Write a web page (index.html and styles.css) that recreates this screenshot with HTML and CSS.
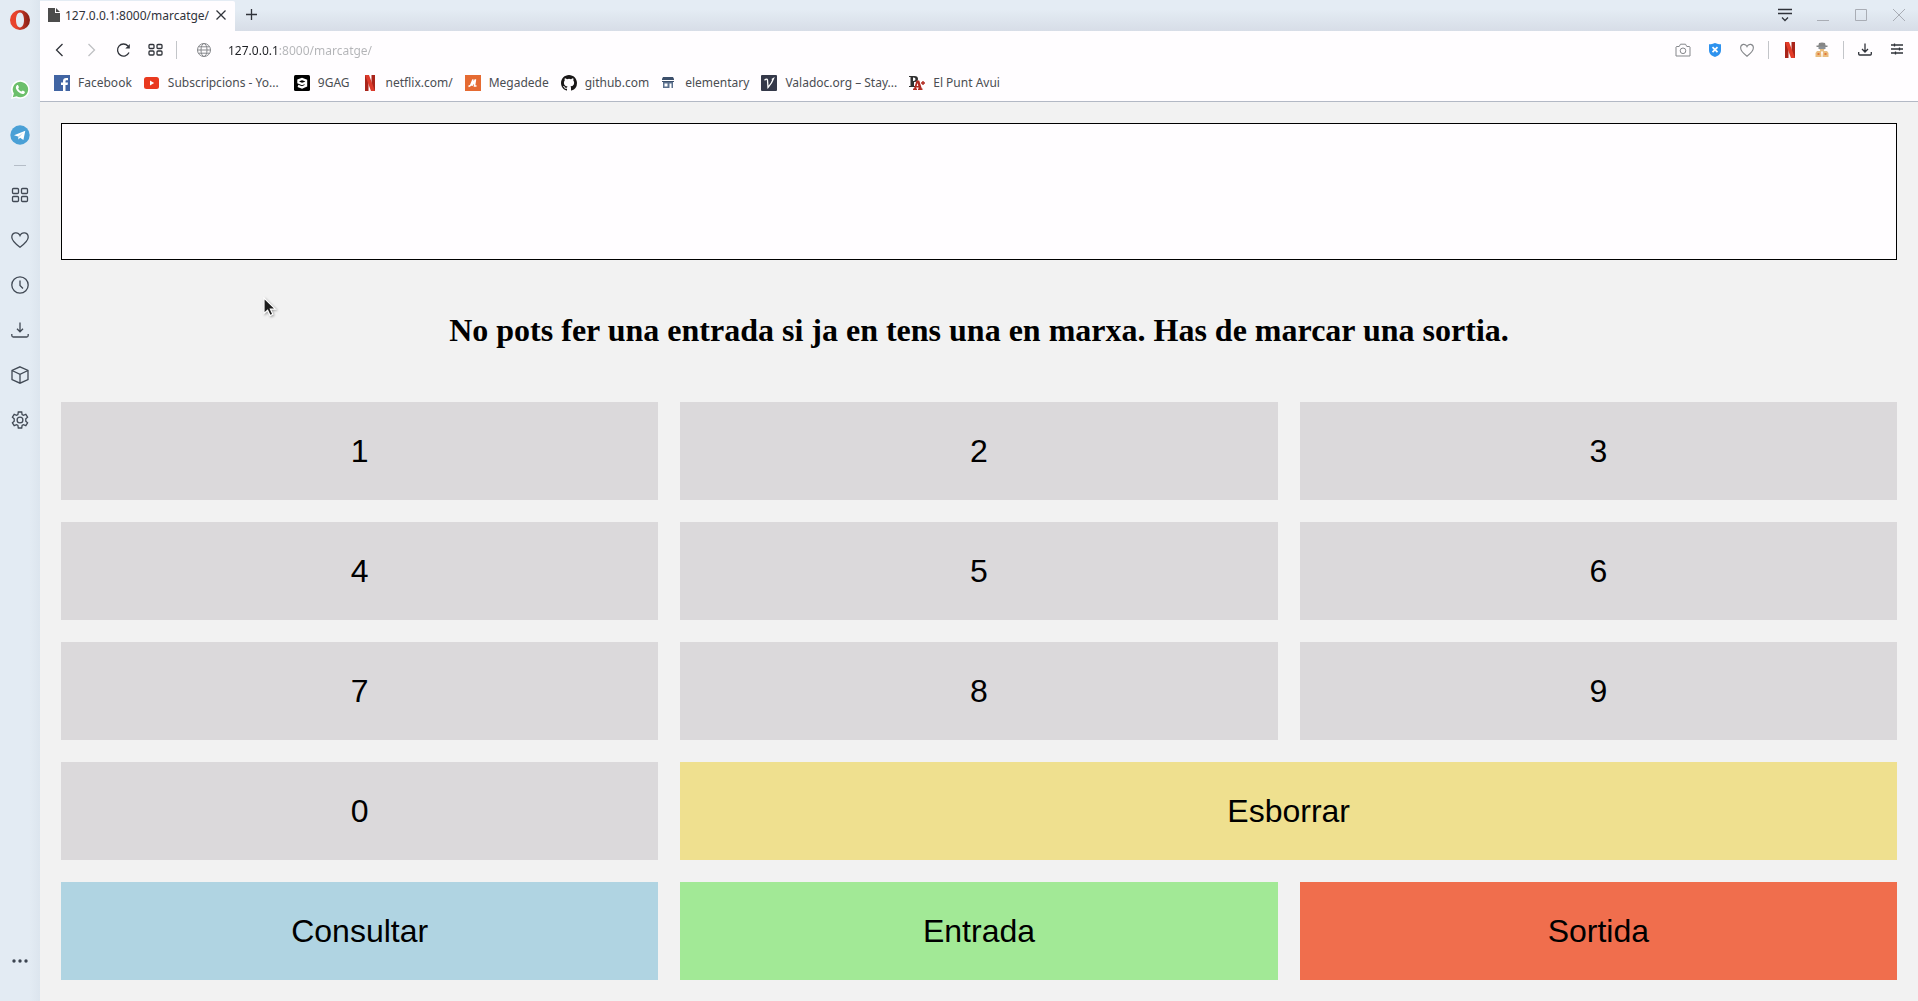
FILE: index.html
```html
<!DOCTYPE html>
<html lang="ca">
<head>
<meta charset="utf-8">
<title>127.0.0.1:8000/marcatge/</title>
<link rel="stylesheet" href="styles.css">
</head>
<body>
<div class="browser">
  <aside class="sidebar">
    <button class="opera" aria-label="Opera">
      <svg width="20" height="20" viewBox="0 0 20 20"><defs><linearGradient id="o" x1="0" x2="1"><stop offset="0.3" stop-color="#e8432c"/><stop offset="0.9" stop-color="#8f2318"/></linearGradient></defs><path fill="url(#o)" fill-rule="evenodd" d="M10 0a10 10 0 1 0 0 20 10 10 0 0 0 0-20zM10 2.600c2.500 0 4 3 4 7.400s-1.500 7.400-4 7.400-4-3-4-7.400 1.500-7.400 4-7.400z"/></svg>
    </button>
    <button class="side-btn" aria-label="WhatsApp">
      <svg width="20" height="20" viewBox="0 0 20 20"><path fill="#fff" d="M1 19l1.400-4.500A9.300 9.300 0 1 1 6 17.800z"/><path fill="#6cbf6b" d="M2.800 17.200l1.100-3.600a7.700 7.700 0 1 1 2.700 2.600z"/><path fill="#fff" d="M6.700 5.400c.5-.5 1.300-.5 1.500.1l.7 1.600c.2.500-.8 1.200-.6 1.600.7 1.300 1.600 2.200 3 2.800.5.200 1.100-1.100 1.600-.9l1.600.8c.7.400.3 1.500-.3 2-.8.700-2 .7-3.400.1-2.200-1-3.900-2.700-4.700-4.700-.4-1.300-.3-2.500.6-3.400z"/></svg>
    </button>
    <button class="side-btn" aria-label="Telegram">
      <svg width="20" height="20" viewBox="0 0 20 20"><circle cx="10" cy="10" r="9.700" fill="#4aa0d6"/><path fill="#fff" d="M4 10.200l11.300-4.500-1.900 9.300-3.300-2.300-1.700 1.700-.4-2.800z"/><path fill="#b9d8ea" d="M8 11.600l5.400-4.100-4.200 4.600-.8 2.300z"/></svg>
    </button>
    <div class="side-rule"></div>
    <button class="side-btn" aria-label="Speed Dial">
      <svg class="line" width="18" height="18" viewBox="0 0 18 18"><rect x="1.500" y="2.500" width="6" height="5" rx="1"/><rect x="10.500" y="2.500" width="6" height="5" rx="1"/><rect x="1.500" y="10.500" width="6" height="5" rx="1"/><rect x="10.500" y="10.500" width="6" height="5" rx="1"/></svg>
    </button>
    <button class="side-btn" aria-label="Bookmarks">
      <svg class="line" width="18" height="18" viewBox="0 0 18 18"><path d="M9 16.200C5 13.200.8 10 .8 6.200.8 1.200 7 .2 9 4.600c2-4.400 8.200-3.400 8.200 1.600 0 3.800-4.200 7-8.200 10z"/></svg>
    </button>
    <button class="side-btn" aria-label="History">
      <svg class="line" width="18" height="18" viewBox="0 0 18 18"><circle cx="9" cy="9" r="8.200"/><path d="M9 4.500v5l3 3"/></svg>
    </button>
    <button class="side-btn" aria-label="Downloads">
      <svg class="line" width="18" height="18" viewBox="0 0 18 18"><path d="M9 1.500v9M6 7.800l3 3 3-3M.8 13v1.500q0 1.500 1.500 1.500h13.400q1.500 0 1.500-1.500V13"/></svg>
    </button>
    <button class="side-btn" aria-label="Extensions">
      <svg class="line" width="18" height="18" viewBox="0 0 18 18"><path d="M9 .8l8 3.700v9L9 17.200l-8-3.700v-9zM1 4.500l8 3.900 8-3.900M9 8.400v8.800"/></svg>
    </button>
    <button class="side-btn" aria-label="Settings">
      <svg class="line" width="18" height="18" viewBox="0 0 18 18"><circle cx="9" cy="9" r="2.900"/><path d="M7.300 1h3.400l.4 2.500 1.300.8 2.400-.9 1.800 2.800-1.800 1.700v2.200l1.800 1.700-1.800 2.800-2.400-.9-1.300.8-.4 2.500H7.300l-.4-2.500-1.300-.8-2.400.9-1.800-2.800 1.800-1.700V7.900L1.400 6.200l1.800-2.800 2.400.9 1.300-.8z"/></svg>
    </button>
    <button class="side-btn side-more" aria-label="More">
      <svg width="16" height="4" viewBox="0 0 16 4" fill="#3c4450"><circle cx="2" cy="2" r="1.700"/><circle cx="8" cy="2" r="1.700"/><circle cx="14" cy="2" r="1.700"/></svg>
    </button>
  </aside>

  <div class="window">
    <header class="tabbar">
      <div class="tab">
        <svg width="12" height="14" viewBox="0 0 12 14" fill="#4c4c4c"><path d="M0 0h7v5h5v9H0z"/><path d="M8 0l4 4H8z"/></svg>
        <span class="tab-title">127.0.0.1:8000/marcatge/</span>
        <button class="tab-close" aria-label="Close tab"><svg class="line dark" width="10" height="10" viewBox="0 0 10 10"><path d="M.5.5l9 9M9.500.5l-9 9"/></svg></button>
      </div>
      <button class="icon-btn" aria-label="New tab"><svg class="line dark" width="12" height="12" viewBox="0 0 12 12"><path d="M6.500 0v11M1 5.500h11"/></svg></button>
      <div class="win-controls">
        <button class="win-btn" aria-label="Tab menu"><svg class="line dark" width="14" height="14" viewBox="0 0 14 14"><path d="M0 1.500h14M0 5.500h14M4 9.500l3 3 3-3"/></svg></button>
        <button class="win-btn" aria-label="Minimize"><svg class="line pale" width="12" height="12" viewBox="0 0 12 12"><path d="M0 11.500h12"/></svg></button>
        <button class="win-btn" aria-label="Maximize"><svg class="line pale" width="12" height="12" viewBox="0 0 12 12"><path d="M.5.5h11v11H.5z"/></svg></button>
        <button class="win-btn" aria-label="Close"><svg class="line pale" width="12" height="12" viewBox="0 0 12 12"><path d="M0 0l12 12M12 0L0 12"/></svg></button>
      </div>
    </header>

    <nav class="toolbar">
      <button class="icon-btn" aria-label="Back"><svg class="line dark" width="14" height="14" viewBox="0 0 14 14"><path d="M10.500 1l-6 6 6 6"/></svg></button>
      <button class="icon-btn" aria-label="Forward"><svg class="line faint" width="14" height="14" viewBox="0 0 14 14"><path d="M4.500 1l6 6-6 6"/></svg></button>
      <button class="icon-btn" aria-label="Reload"><svg class="line dark" width="14" height="14" viewBox="0 0 14 14"><path d="M13 9.500A6 6 0 1 1 12 3"/><path fill="#30333a" stroke="none" d="M13.800 1v4.500H9.300z"/></svg></button>
      <button class="icon-btn" aria-label="Speed Dial"><svg class="line dark" width="14" height="12" viewBox="0 0 14 12"><rect x="1" y=".5" width="5" height="4" rx="1"/><rect x="9" y=".5" width="5" height="4" rx="1"/><rect x="1" y="7" width="5" height="4" rx="1"/><rect x="9" y="7" width="5" height="4" rx="1"/></svg></button>
      <span class="sep"></span>
      <button class="icon-btn site-info" aria-label="Site information"><svg class="line gray" width="14" height="14" viewBox="0 0 14 14"><circle cx="7" cy="7" r="6.500"/><ellipse cx="7" cy="7" rx="3" ry="6.500"/><path d="M.5 7h13M1.500 3.800h11M1.500 10.200h11"/></svg></button>
      <input class="address" type="text" aria-label="Address" value="127.0.0.1:8000/marcatge/">
      <button class="icon-btn" aria-label="Snapshot"><svg class="line gray" width="16" height="14" viewBox="0 0 16 14"><path d="M1.500 3.500h2.700L5.500 1.200h5l1.300 2.300h2.700l.5.500v9H1V4z"/><circle cx="8" cy="7.800" r="2.800"/></svg></button>
      <button class="icon-btn" aria-label="Ad blocker"><svg width="14" height="14" viewBox="0 0 14 14"><path fill="#2e92ee" d="M7 0c2 1 4 1.300 6 1.300V7c0 4-3 6-6 7-3-1-6-3-6-7V1.300C3 1.300 5 1 7 0z"/><path stroke="#fff" stroke-width="1.700" d="M4.500 4.200l5 5M9.500 4.200l-5 5"/></svg></button>
      <button class="icon-btn" aria-label="Save to bookmarks"><svg class="line gray" width="14" height="14" viewBox="0 0 18 18"><path stroke-width="1.400" d="M9 17C5 14 .8 10.500 .8 6.200.8 1 7 .2 9 4.600c2-4.400 8.200-3.600 8.200 1.600 0 4.300-4.200 7.800-8.200 10.800z"/></svg></button>
      <span class="sep"></span>
      <button class="icon-btn" aria-label="Netflix extension"><svg width="10" height="16" viewBox="0 0 10 16"><path fill="#a9241a" d="M0 0h3.500v16H0zM6.500 0H10v16H6.500z"/><path fill="#e33b28" d="M0 0h4l6 16H6z"/></svg></button>
      <button class="icon-btn" aria-label="Private mode extension"><svg width="14" height="16" viewBox="0 0 14 16"><path fill="#858585" d="M4 1q3-1 6 0l.6 2.500H12.500V5h-11V3.500h1.900z"/><path fill="#8b9096" d="M3.500 4.500h7V7h-7z"/><path fill="#e9bd7f" d="M4.500 7h5l-1 2.500h-3zM2 9h4l.5 6H.5v-4zM8 9h4l1.500 2v4h-6z"/><path fill="#e4783a" d="M2.500 11h2v2h-2zM9.500 11h2v2h-2z"/></svg></button>
      <span class="sep"></span>
      <button class="icon-btn" aria-label="Downloads"><svg class="line dark" width="14" height="14" viewBox="0 0 14 14"><path d="M7 .5v8M4 6l3 3 3-3M.7 9v2q0 1 1 1h10.600q1 0 1-1V9"/></svg></button>
      <button class="icon-btn" aria-label="Easy setup"><svg class="line dark" width="12" height="12" viewBox="0 0 12 12"><path d="M0 1h12M0 5h12M0 9h12M3.500-.5v3M8.500 3.500v3M4.500 7.500v3"/></svg></button>
    </nav>

    <nav class="bookmarks" aria-label="Bookmarks bar">
      <a class="bookmark" href="#"><svg width="16" height="16" viewBox="0 0 16 16"><path fill="#4164a3" d="M0 0h16v16H0z"/><path fill="#fff" d="M9 16V10H7V7.500h2V6c0-2 1.200-3 3-3h2v2.300h-1.500c-.8 0-1 .4-1 1.100v1.100H14l-.4 2.500h-2.100v6z"/></svg><span>Facebook</span></a>
      <a class="bookmark clipped" href="#"><svg width="16" height="16" viewBox="0 0 16 16"><rect x="0" y="2" width="15" height="12" rx="2.500" fill="#e9391f"/><path fill="#fff" d="M6 5.500v5L10.200 8z"/></svg><span>Subscripcions - Yo...</span></a>
      <a class="bookmark" href="#"><svg width="16" height="16" viewBox="0 0 16 16"><rect width="16" height="16" rx="1.500"/><path fill="none" stroke="#fff" stroke-width="2.400" d="M12 7.500L8 9 4.500 7.500V5.300L8 4l4 1.500v5.200L8 12.500l-4-1.600"/></svg><span>9GAG</span></a>
      <a class="bookmark" href="#"><svg width="16" height="16" viewBox="0 0 16 16"><path fill="#a9241a" d="M3 0h3.500v16H3zM9.500 0H13v16H9.500z"/><path fill="#dc3a2b" d="M3 0h4l6 16H9z"/></svg><span>netflix.com/</span></a>
      <a class="bookmark" href="#"><svg width="16" height="16" viewBox="0 0 16 16"><path fill="#e56a32" d="M0 0h16v16H0z"/><path fill="none" stroke="#fff" stroke-width="1.500" d="M3.500 11.500l2-1 2.500-6-1 6 3.500-6-1 6.500h2"/></svg><span>Megadede</span></a>
      <a class="bookmark" href="#"><svg width="16" height="16" viewBox="0 0 16 16"><path fill="#191717" d="M8 0C3.580 0 0 3.580 0 8c0 3.540 2.290 6.530 5.470 7.590.4.070.55-.17.55-.38 0-.19-.01-.82-.01-1.490-2.010.37-2.530-.49-2.690-.94-.09-.23-.48-.94-.82-1.130-.28-.15-.68-.52-.01-.53.63-.01 1.080.58 1.230.82.720 1.210 1.870.87 2.330.66.070-.52.280-.87.510-1.070-1.780-.2-3.640-.89-3.640-3.950 0-.87.310-1.590.82-2.150-.08-.2-.36-1.020.08-2.120 0 0 .67-.21 2.200.82a7.600 7.600 0 0 1 4 0c1.530-1.040 2.200-.82 2.200-.82.440 1.100.16 1.920.08 2.120.51.560.82 1.270.82 2.150 0 3.070-1.870 3.750-3.650 3.950.29.250.54.730.54 1.480 0 1.070-.01 1.930-.01 2.200 0 .21.150.46.550.38A8 8 0 0 0 16 8c0-4.420-3.580-8-8-8z"/></svg><span>github.com</span></a>
      <a class="bookmark" href="#"><svg width="16" height="16" viewBox="0 0 16 16"><path fill="#3c4f6b" d="M2 2h10l1 2v3H1V4z"/><path fill="#fff" d="M1 5h12v1H1z"/><path fill="#5a6f8d" d="M2 7h10v6H2z"/><path fill="#fff" d="M3.500 8.500h3v3h-3zM8.500 8.500h2V13h-2z"/></svg><span>elementary</span></a>
      <a class="bookmark" href="#"><svg width="16" height="16" viewBox="0 0 16 16"><rect width="16" height="16" rx="1" fill="#343849"/><path fill="none" stroke="#fff" stroke-width="1.300" d="M3.500 5.200Q6 3 6.500 5L7 12.500Q11 8 12.500 3.500l-1.700 1"/></svg><span>Valadoc.org – Stay...</span></a>
      <a class="bookmark" href="#"><svg width="16" height="16" viewBox="0 0 16 16"><path fill="#303030" fill-rule="evenodd" d="M0 1h5.500Q9 1 9 4T5.500 7H5v4h1v1H0v-1h1.500V2H0zM4 2.500V6q2.500.2 2.500-1.800T4 2.500z"/><path fill="#b12b22" fill-rule="evenodd" d="M7.500 5.500h2.700l2.600 8h.7V15H9v-1.500h.9l-.3-1H7.300L7 13.500h1V15H4v-1.500h1zM8.500 8l-.8 3h1.600z"/><path stroke="#b12b22" stroke-width="1.400" d="M12 8h4M14 6v4"/></svg><span>El Punt Avui</span></a>
    </nav>

    <main class="page">
      <input class="display" type="text" aria-label="Codi" readonly>
      <h1 class="message">No pots fer una entrada si ja en tens una en marxa. Has de marcar una sortia.</h1>
      <button class="key">1</button>
      <button class="key">2</button>
      <button class="key">3</button>
      <button class="key">4</button>
      <button class="key">5</button>
      <button class="key">6</button>
      <button class="key">7</button>
      <button class="key">8</button>
      <button class="key">9</button>
      <button class="key">0</button>
      <button class="key clear">Esborrar</button>
      <button class="key query">Consultar</button>
      <button class="key enter">Entrada</button>
      <button class="key exit">Sortida</button>
    </main>
  </div>
</div>
<svg class="pointer" width="16" height="22" viewBox="0 0 16 22"><path fill="#1d1d1d" stroke="#fff" stroke-width="1.200" d="M1 1v15.500l3.600-3.300 2.500 5.400 2.700-1.300-2.400-5.200h5z"/></svg>
</body>
</html>
```
FILE: styles.css
```css
* {
  box-sizing: border-box;
}

body {
  margin: 0;
  font-family: "Noto Sans", "Open Sans", sans-serif;
  font-size: 12px;
  color: #4a4d52;
}

button {
  display: flex;
  align-items: center;
  justify-content: center;
  flex-shrink: 0;
  padding: 0;
  border: 0;
  background: none;
  color: inherit;
}

svg {
  display: block;
  flex-shrink: 0;
}

.line {
  fill: none;
  stroke: #414954;
  stroke-width: 1.3;
  overflow: visible;
}

.dark {
  stroke: #30333a;
}

.gray {
  stroke: #85878b;
  stroke-width: 1;
}

.pale {
  stroke: #a9adb5;
  stroke-width: 1;
}

.faint {
  stroke: #bfc0c3;
}

.browser {
  display: flex;
  min-height: 100vh;
}

.sidebar {
  display: flex;
  flex-direction: column;
  width: 40px;
  flex-shrink: 0;
  padding: 0 1px 18px 0;
  background: linear-gradient(to right, #e3ebf3 75%, #dce5ee);
}

.opera {
  height: 40px;
  margin-bottom: 27px;
}

.side-btn {
  height: 45px;
}

.side-rule {
  width: 12px;
  height: 1px;
  margin: 8px auto 6px;
  background: #b5bdc7;
}

.side-more {
  margin-top: auto;
}

.window {
  display: flex;
  flex-direction: column;
  flex: 1;
  min-width: 0;
  background: #fffdff;
}

.tabbar {
  display: flex;
  height: 31px;
  padding-bottom: 1px;
  background: linear-gradient(#e4ecf4 30%, #d7dde7);
}

.tab {
  display: flex;
  align-items: center;
  gap: 5px;
  width: 195px;
  height: 30px;
  margin-top: 1px;
  padding: 0 8px 2px;
  background: #fffdff;
  border-radius: 0 2px 0 0;
}

.tab-title {
  flex: 1;
  color: #30333a;
  white-space: nowrap;
}

.tab-close {
  width: 12px;
  height: 20px;
}

.icon-btn {
  width: 32px;
}

.win-controls {
  display: flex;
  margin-left: auto;
}

.win-btn {
  width: 38px;
}

.toolbar {
  display: flex;
  height: 38px;
  padding: 0 5px 0 3px;
}

.sep {
  width: 1px;
  height: 18px;
  margin: 0 5px;
  align-self: center;
  background: #c3c5c9;
}

.site-info {
  margin-left: 6px;
}

.address {
  flex: 1;
  min-width: 0;
  margin-left: 8px;
  padding: 0;
  border: 0;
  outline: 0;
  font: inherit;
  color: transparent;
  background: linear-gradient(to right, #1e2024 50px, #b3b4b7 50px);
  background-clip: text;
}

.bookmarks {
  display: flex;
  gap: 12px;
  height: 33px;
  padding: 0 14px 5px;
  border-bottom: 1px solid #b3b9c5;
}

.bookmark {
  display: flex;
  align-items: center;
  gap: 8px;
  color: inherit;
  text-decoration: none;
  white-space: nowrap;
}

.clipped {
  width: 138px;
}

.page {
  display: grid;
  flex: 1;
  grid-template-columns: repeat(3, minmax(0, 1fr));
  grid-template-rows: 1.4fr repeat(6, 1fr);
  gap: 22px;
  padding: 21px;
  background: #f2f2f2;
}

.display {
  grid-column: 1 / -1;
  min-width: 0;
  padding: 0 20px;
  border: 1px solid #000;
  background: #fffdff;
  font: 32px "Liberation Sans", Arial, sans-serif;
}

.message {
  grid-column: 1 / -1;
  align-self: center;
  margin: 0;
  padding-bottom: 2px;
  font: bold 32px "Liberation Serif", "Times New Roman", serif;
  color: #000;
  text-align: center;
}

.key {
  background: #dbd9db;
  font: 32px "Liberation Sans", Arial, sans-serif;
  color: #000;
}

.clear {
  grid-column: span 2;
  background: #efe08f;
}

.query {
  background: #b0d4e2;
}

.enter {
  background: #a2e996;
}

.exit {
  background: #f06e4d;
}

.pointer {
  position: absolute;
  left: 263px;
  top: 297px;
  filter: drop-shadow(1px 1px 1px #0005);
}
```
